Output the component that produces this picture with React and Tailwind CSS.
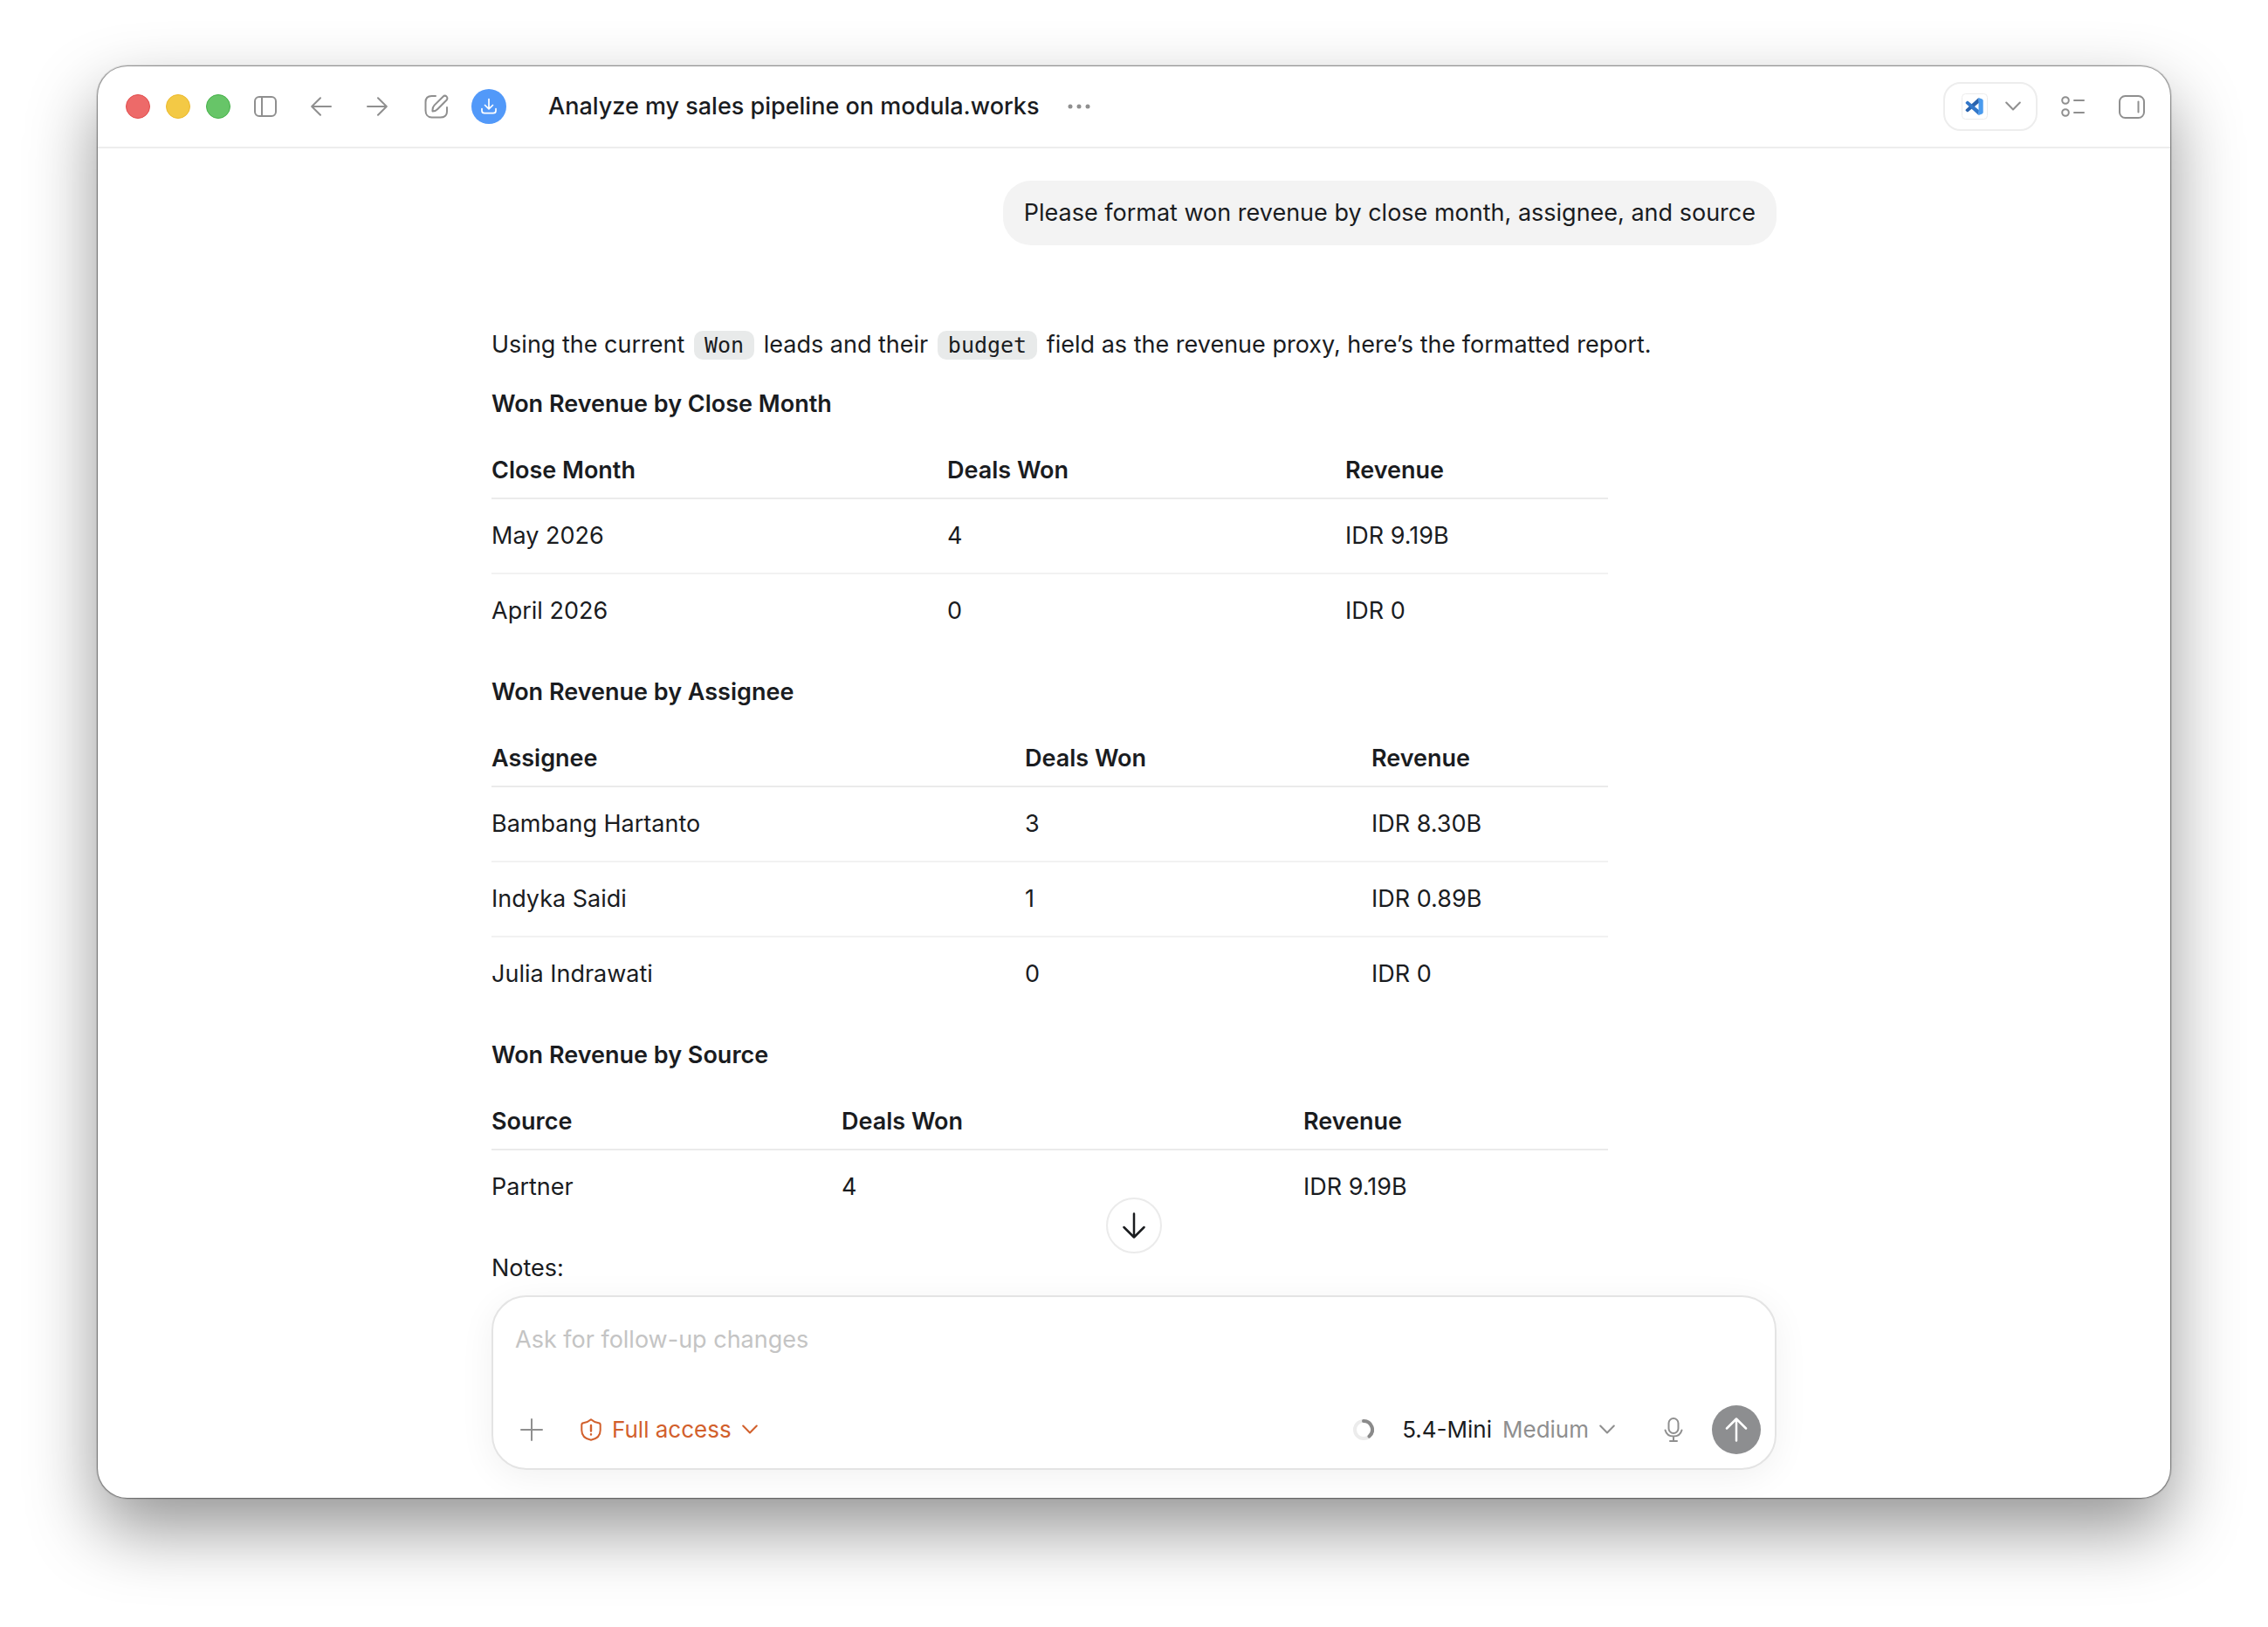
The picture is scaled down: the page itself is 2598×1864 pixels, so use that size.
import React, { useState } from "react";

const reports = [
  {
    title: "Won Revenue by Close Month",
    columns: ["Close Month", "Deals Won", "Revenue"],
    widths: ["w-[522px]", "w-[456px]", "w-auto"],
    rows: [
      ["May 2026", "4", "IDR 9.19B"],
      ["April 2026", "0", "IDR 0"],
    ],
  },
  {
    title: "Won Revenue by Assignee",
    columns: ["Assignee", "Deals Won", "Revenue"],
    widths: ["w-[611px]", "w-[397px]", "w-auto"],
    rows: [
      ["Bambang Hartanto", "3", "IDR 8.30B"],
      ["Indyka Saidi", "1", "IDR 0.89B"],
      ["Julia Indrawati", "0", "IDR 0"],
    ],
  },
  {
    title: "Won Revenue by Source",
    columns: ["Source", "Deals Won", "Revenue"],
    widths: ["w-[401px]", "w-[529px]", "w-auto"],
    rows: [["Partner", "4", "IDR 9.19B"]],
  },
];

const Icon = ({ w, h, stroke = 2, children }) => (
  <svg
    width={w}
    height={h}
    viewBox={`0 0 ${w} ${h}`}
    fill="none"
    stroke="currentColor"
    strokeWidth={stroke}
    strokeLinecap="round"
    strokeLinejoin="round"
    className="shrink-0"
    aria-hidden="true"
  >
    {children}
  </svg>
);

const Chevron = () => (
  <Icon w={18} h={12}>
    <path d="M1.2 1.5 9 9.5l7.8-8" />
  </Icon>
);

const VsCodeLogo = () => (
  <svg width="30" height="30" viewBox="0 0 30 30" aria-hidden="true">
    <rect x="0.5" y="0.5" width="29" height="29" rx="4" fill="#fff" stroke="#ececec" />
    <path d="M19.5 5 5 18.2c-.6.6-.6 1.3 0 1.8l1 .9c.5.4 1.1.4 1.600 0L20 10.800z" fill="#2a63ad" />
    <path d="M19.5 25 5 11.800c-.6-.6-.6-1.3 0-1.8l1-.9c.5-.4 1.1-.4 1.600 0L20 19.200z" fill="#3277c9" />
    <path d="M19.5 5l4 1.6c.8.3 1.2.9 1.2 1.7v13.4c0 .8-.4 1.4-1.2 1.7l-4 1.6z" fill="#4a9bee" />
  </svg>
);

const TitleBar = () => (
  <header className="flex h-[94px] shrink-0 items-center border-b-2 border-[#ededed] pl-8 pr-[29px] text-[#8f8f8f]">
    <div className="flex gap-[18px]">
      <button aria-label="Close" className="size-7 rounded-full border border-[#e24c4c] bg-[#ed6a69]" />
      <button aria-label="Minimize" className="size-7 rounded-full border border-[#ecb92a] bg-[#f3c945]" />
      <button aria-label="Zoom" className="size-7 rounded-full border border-[#45b149] bg-[#67c568]" />
    </div>

    <button aria-label="Toggle sidebar" className="ml-[27px]">
      <Icon w={26} h={24}>
        <rect x="1" y="1" width="24" height="22" rx="5" />
        <path d="M9 1v22" />
      </Icon>
    </button>
    <button aria-label="Back" className="ml-[39px]">
      <Icon w={24} h={22}>
        <path d="M23 11H1.5M11 1.2 1.2 11l9.8 9.8" />
      </Icon>
    </button>
    <button aria-label="Forward" className="ml-10">
      <Icon w={24} h={22}>
        <path d="M1 11h21.5M13 1.2l9.8 9.8-9.8 9.8" />
      </Icon>
    </button>
    <button aria-label="New chat" className="ml-[42px]">
      <Icon w={28} h={28}>
        <path d="M13 2H8.5C4 2 1.5 4.5 1.5 9v9.500C1.5 23 4 26.5 8.5 26.5h10c4.5 0 7.5-2.5 7.5-7V15" />
        <path d="M9.5 19.5c-.3-3 .2-5 2-6.900L21.5 2.700c1.2-1.2 3-1.2 4.100-.1s1.1 2.900-.1 4.100L15.300 17c-1.700 1.800-3.400 2.500-5.800 2.500z" />
      </Icon>
    </button>
    <button
      aria-label="Download update"
      className="ml-[26px] flex size-10 items-center justify-center rounded-full bg-[#5299f9] text-white"
    >
      <Icon w={20} h={20} stroke={1.7}>
        <path d="M10 1.5v11M5.5 8.5l4.5 4.3 4.5-4.3M2 12.500v2.200c0 2 1 3 3 3h10c2 0 3-1 3-3v-2.200" />
      </Icon>
    </button>

    <h1 className="ml-12 text-[27px] font-medium text-[#1a1c1f]">
      Analyze my sales pipeline on modula.works
    </h1>
    <button aria-label="More" className="ml-8">
      <svg width="26" height="6" viewBox="0 0 26 6" fill="currentColor" aria-hidden="true">
        <circle cx="3" cy="3" r="2.5" />
        <circle cx="13" cy="3" r="2.5" />
        <circle cx="23" cy="3" r="2.5" />
      </svg>
    </button>

    <button
      aria-label="Open in editor"
      className="ml-auto flex h-14 w-[108px] items-center justify-between rounded-[20px] border-2 border-[#ededed] pl-[19px] pr-[17px]"
    >
      <VsCodeLogo />
      <Chevron />
    </button>
    <button aria-label="Tasks" className="ml-[27px]">
      <Icon w={27} h={24}>
        <circle cx="5" cy="5" r="3.8" />
        <circle cx="5" cy="19" r="3.8" />
        <path d="M15 5h11M15 19h11" />
      </Icon>
    </button>
    <button aria-label="Toggle side panel" className="ml-[39px]">
      <Icon w={30} h={27}>
        <rect x="1" y="1" width="28" height="25" rx="6.5" />
        <path d="M22.5 7.500v12" />
      </Icon>
    </button>
  </header>
);

const ReportTable = ({ title, columns, widths, rows }) => (
  <section className="mb-[31px]">
    <h2 className="mb-[22px] font-semibold">{title}</h2>
    <table className="w-full max-w-[1279px] table-fixed border-collapse text-left">
      <thead>
        <tr className="border-b-2 border-[#ebebeb]">
          {columns.map((column, i) => (
            <th key={column} className={`pb-[10px] pt-3 font-semibold ${widths[i]}`}>
              {column}
            </th>
          ))}
        </tr>
      </thead>
      <tbody>
        {rows.map((row) => (
          <tr key={row[0]} className="h-[86px] border-b-2 border-[#f2f2f2] last:h-[84px] last:border-b-0">
            {row.map((cell, i) => (
              <td key={i}>{cell}</td>
            ))}
          </tr>
        ))}
      </tbody>
    </table>
  </section>
);

const Code = ({ children }) => (
  <code className="mx-[3px] rounded-[10px] bg-[#e8eaea] px-3 py-[2px] font-['DejaVu_Sans_Mono',monospace] text-[25px]">
    {children}
  </code>
);

const Composer = () => {
  const [message, setMessage] = useState("");

  return (
    <form
      onSubmit={(e) => e.preventDefault()}
      className="relative flex h-[200px] flex-col justify-between rounded-[40px] border-2 border-[#e4e4e4] bg-white pb-4 pl-[25px] pr-4 pt-7 shadow-[0_8px_40px_rgba(0,0,0,0.06)]"
    >
      <button
        type="button"
        aria-label="Scroll to bottom"
        className="absolute bottom-full left-1/2 mb-[50px] flex size-16 -translate-x-1/2 items-center justify-center rounded-full border-2 border-[#ebebeb] bg-white"
      >
        <Icon w={26} h={30} stroke={2.5}>
          <path d="M13 1.5v27M1.5 17 13 28.5 24.5 17" />
        </Icon>
      </button>

      <input
        type="text"
        aria-label="Message"
        placeholder="Ask for follow-up changes"
        value={message}
        onChange={(e) => setMessage(e.target.value)}
        className="w-full outline-none placeholder:text-[#c4c4c4]"
      />

      <div className="flex items-center text-[26px] text-[#8f8f8f]">
        <button type="button" aria-label="Add" className="ml-[6px]">
          <Icon w={26} h={26}>
            <path d="M13 1v24M1 13h24" />
          </Icon>
        </button>
        <button type="button" className="ml-[43px] flex items-center text-[#d2602c]">
          <Icon w={24} h={26}>
            <path d="M12 1.2c3 2.6 5.7 3.7 8.8 4.1 1.2.2 1.9.9 1.9 2.2v6c0 6.3-4 10-10.700 11.300C5.3 23.500 1.3 19.800 1.3 13.500v-6c0-1.3.7-2 1.9-2.200C6.3 4.900 9 3.800 12 1.2z" />
            <path d="M12 8v6.5M12 18.2v.3" strokeWidth="2.4" />
          </Icon>
          <span className="mx-3">Full access</span>
          <Chevron />
        </button>

        <svg width="24" height="24" viewBox="0 0 24 24" fill="none" strokeWidth="4" className="ml-auto" aria-hidden="true">
          <circle cx="12" cy="12" r="10" stroke="#ececec" />
          <path d="M12 2a10 10 0 0 1 6.5 17.600" stroke="#8a8a8a" strokeLinecap="round" />
        </svg>
        <button type="button" className="ml-8 flex items-center">
          <span className="text-[#1a1c1f]">5.4-Mini</span>
          <span className="mx-3">Medium</span>
          <Chevron />
        </button>
        <button type="button" aria-label="Dictate" className="ml-14">
          <Icon w={22} h={28}>
            <rect x="5.5" y="1" width="11" height="17" rx="5.5" />
            <path d="M1.5 14.5c1.2 4.3 4.9 7 9.5 7s8.3-2.7 9.5-7M11 21.500V27M7 27h8" />
          </Icon>
        </button>
        <button
          type="submit"
          aria-label="Send"
          className="ml-[33px] flex size-14 items-center justify-center rounded-full bg-[#8d8e90] text-white"
        >
          <Icon w={26} h={28} stroke={2.5}>
            <path d="M13 26.500v-25M2 12.500l11-11 11 11" />
          </Icon>
        </button>
      </div>
    </form>
  );
};

const App = () => {
  return (
    <div className="flex min-h-screen bg-white px-28 pb-[148px] pt-[76px] font-[Inter,sans-serif] text-[27px] leading-[42px] text-[#1a1c1f]">
      <div className="flex w-full flex-col rounded-[34px] bg-white shadow-[0_0_0_1px_rgba(0,0,0,0.3),0_0_0_2px_rgba(0,0,0,0.1),0_36px_80px_rgba(0,0,0,0.42)]">
        <TitleBar />
        <main className="mx-auto flex w-full max-w-[1472px] flex-1 flex-col pb-8 pt-[37px]">
          <p className="self-end rounded-[32px] bg-[#f3f3f3] px-6 py-4">
            Please format won revenue by close month, assignee, and source
          </p>

          <article className="mt-[93px]">
            <p className="mb-[25px]">
              Using the current <Code>Won</Code> leads and their <Code>budget</Code> field as the
              revenue proxy, here’s the formatted report.
            </p>
            {reports.map((report) => (
              <ReportTable key={report.title} {...report} />
            ))}
            <p>Notes:</p>
          </article>

          <div className="mt-auto pt-2">
            <Composer />
          </div>
        </main>
      </div>
    </div>
  );
};

export default App;
